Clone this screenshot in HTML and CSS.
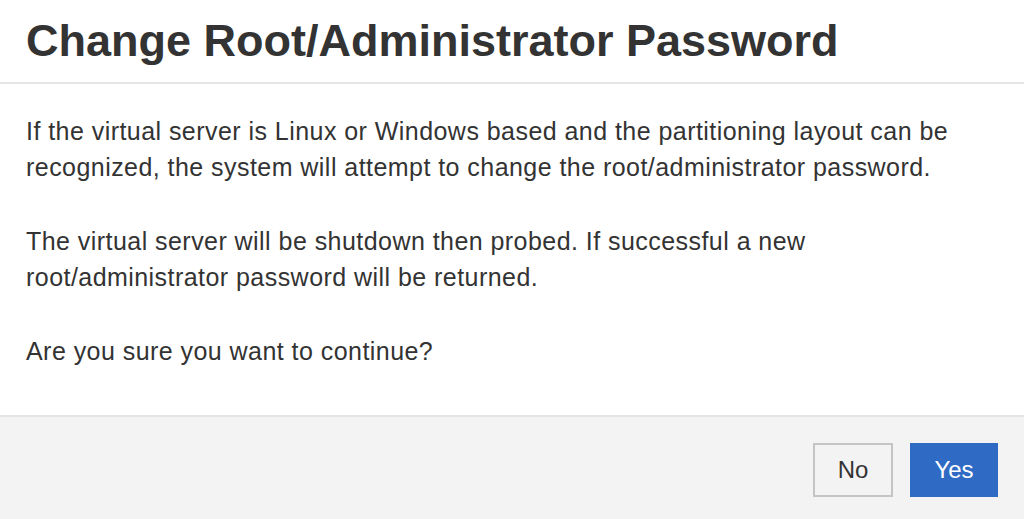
FILE: index.html
```html
<!DOCTYPE html>
<html lang="en">
<head>
  <meta charset="UTF-8" />
  <title>Change Root/Administrator Password</title>
  <link rel="stylesheet" href="styles.css">
</head>
<body>
  <div class="modal">
    <div class="modal-header">
      <h2>Change Root/Administrator Password</h2>
    </div>

    <div class="modal-body">
      <p>If the virtual server is Linux or Windows based and the partitioning layout can be recognized, the system will attempt to change the root/administrator password.</p>
      <p>The virtual server will be shutdown then probed. If successful a new root/administrator password will be returned.</p>
      <p>Are you sure you want to continue?</p>
    </div>

    <div class="modal-footer">
      <button class="btn">No</button>
      <button class="btn btn-primary">Yes</button>
    </div>
  </div>
</body>
</html>
```

FILE: styles.css
```css
body {
  margin: 0;
  font-family: "Liberation Sans", Arial, sans-serif;
  color: #333;
  background: #fff;
}
.modal {
  display: flex;
  flex-direction: column;
  height: 519px;
}
.modal-header {
  height: 82px;
  padding: 0 26px;
  border-bottom: 2px solid #e6e6e6;
  display: flex;
  align-items: center;
}
.modal-header h2 {
  margin: 0;
  font-size: 45px;
  font-weight: bold;
}
.modal-body {
  flex: 1;
  padding: 29px 50px 0 26px;
  font-size: 25px;
  letter-spacing: 0.45px;
  line-height: 36px;
}
.modal-body p {
  margin: 0 0 38px;
}
.modal-footer {
  background: #f3f3f3;
  border-top: 2px solid #e4e4e4;
  height: 102px;
  padding: 0 26px;
  display: flex;
  justify-content: flex-end;
  align-items: flex-start;
  gap: 17px;
}
.btn {
  margin-top: 26px;
  height: 54px;
  min-width: 80px;
  padding: 0 20px;
  font-family: inherit;
  font-size: 24px;
  color: #333;
  background: #f3f3f3;
  border: 2px solid #c4c4c4;
}
.btn-primary {
  min-width: 88px;
  color: #fff;
  background: #2f6bc5;
  border-color: #2f6bc5;
}
```
